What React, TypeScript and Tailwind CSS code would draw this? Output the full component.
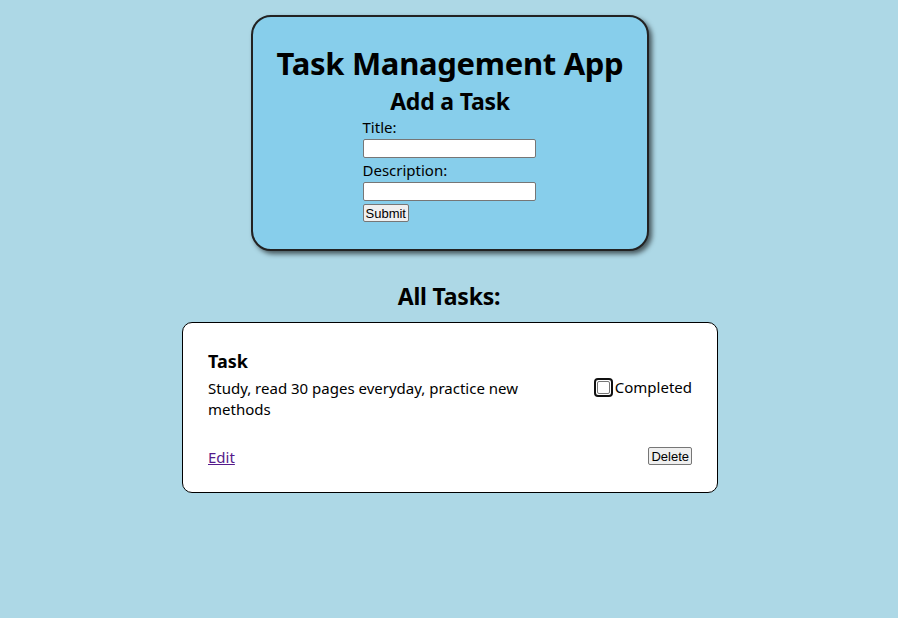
export default function App() {
  return (
    <div className="min-h-screen bg-[#add8e6] pt-[15px] font-['Noto_Sans',sans-serif] text-black">
      <div className="mx-auto flex w-[398px] translate-x-[1px] flex-col items-center rounded-[20px] border-2 border-[#222] bg-[#87ceeb] pt-[25px] pb-[27px] shadow-[3px_3px_5px_rgba(0,0,0,0.6)]">
        <h1 className="text-[31px] leading-[43px] font-bold tracking-[-0.3px]">Task Management App</h1>
        <h2 className="text-[23px] leading-[32px] font-bold tracking-[-0.2px]">Add a Task</h2>
        <form className="flex w-[173px] -translate-x-[1px] flex-col items-start">
          <label className="text-[15px] leading-[21px]">Title:</label>
          <input className="mt-[1px] h-[19px] w-[173px] rounded-[2px] border border-[#767676] bg-white" />
          <label className="mt-[1px] text-[15px] leading-[22px]">Description:</label>
          <input className="mt-[1px] h-[19px] w-[173px] rounded-[2px] border border-[#767676] bg-white" />
          <button
            type="button"
            className="mt-[3px] h-[18px] rounded-[2px] border border-[#767676] bg-[#efefef] px-[2px] font-['Liberation_Sans',sans-serif] text-[13px] leading-[15px]"
          >
            Submit
          </button>
        </form>
      </div>

      <h2 className="mt-[30px] text-center text-[23px] leading-[31px] font-bold tracking-[-0.2px]">All Tasks:</h2>

      <div className="mx-auto mt-[10px] flex h-[171px] w-[536px] translate-x-[1px] justify-between rounded-[10px] border border-black bg-white px-[25px] pt-[26px]">
        <div className="flex w-[340px] flex-col">
          <h3 className="text-[18px] leading-[24px] font-bold">Task</h3>
          <p className="mt-[5px] text-[15px] leading-[21px]">Study, read 30 pages everyday, practice new methods</p>
          <a href="#" className="mt-[27px] w-fit text-[15px] leading-[21px] text-[#551a8b] underline">
            Edit
          </a>
        </div>
        <div className="flex flex-col items-end">
          <label className="mt-[28px] flex items-center gap-[2px] text-[15px] leading-[21px]">
            <span className="flex h-[19px] w-[19px] items-center justify-center rounded-[4px] border-2 border-[#111]">
              <span className="h-[13px] w-[13px] rounded-[2px] border border-[#767676] bg-white" />
            </span>
            Completed
          </label>
          <button
            type="button"
            className="mt-[49px] h-[18px] rounded-[2px] border border-[#767676] bg-[#efefef] px-[2px] font-['Liberation_Sans',sans-serif] text-[13px] leading-[15px]"
          >
            Delete
          </button>
        </div>
      </div>
    </div>
  );
}
